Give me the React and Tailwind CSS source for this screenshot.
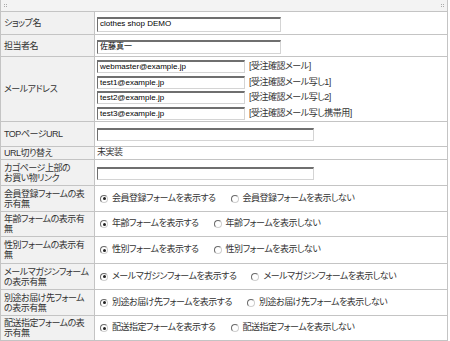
import React from "react";

const FONT = "[font-family:'Liberation_Sans','Noto_Sans_CJK_JP',sans-serif] [font-feature-settings:'palt']";

function Input({ w, h, value }) {
  return (
    <div
      className={`${w} ${h} box-border border-t-2 border-l border-b border-r border-t-[#6f6f6f] border-l-[#6f6f6f] border-b-[#d4d4d4] border-r-[#d4d4d4] bg-white pl-[2px] text-[8px] leading-[10px] tracking-normal text-black overflow-hidden whitespace-nowrap`}
    >
      {value}
    </div>
  );
}

function Radio({ checked, label, className = "" }) {
  return (
    <div className={`flex items-center ${className}`}>
      <span className="w-[8px] h-[8px] rounded-full box-border border border-t-[#6a6a6a] border-l-[#6a6a6a] border-b-[#cfcfcf] border-r-[#cfcfcf] bg-white flex items-center justify-center">
        {checked && <span className="w-[3px] h-[3px] rounded-full bg-[#222]" />}
      </span>
      <span className="ml-[4px] whitespace-nowrap">{label}</span>
    </div>
  );
}

function Row({ h, label, children, valueClass = "" }) {
  return (
    <div className={`flex ${h} box-border border-b border-[#c4c4c4]`}>
      <div className="w-[94px] box-border border-r border-[#c4c4c4] bg-[#f1f1f1] pl-[3px] flex items-center leading-[10px] whitespace-nowrap overflow-hidden">
        <div>{label}</div>
      </div>
      <div className={`flex-1 flex items-center ${valueClass}`}>{children}</div>
    </div>
  );
}

function Dots() {
  return (
    <span className="grid grid-cols-2 gap-[1px]">
      <span className="w-[1px] h-[1px] bg-[#aaa]" />
      <span className="w-[1px] h-[1px] bg-[#aaa]" />
      <span className="w-[1px] h-[1px] bg-[#aaa]" />
      <span className="w-[1px] h-[1px] bg-[#aaa]" />
    </span>
  );
}

export default function App() {
  const radios = [
    ["h-[26px]", <>会員登録フォームの表<br />示有無</>, "会員登録フォームを表示する", "会員登録フォームを表示しない"],
    ["h-[25px]", <>年齢フォームの表示有<br />無</>, "年齢フォームを表示する", "年齢フォームを表示しない"],
    ["h-[27px]", <>性別フォームの表示有<br />無</>, "性別フォームを表示する", "性別フォームを表示しない"],
    ["h-[26px]", <>メールマガジンフォーム<br />の表示有無</>, "メールマガジンフォームを表示する", "メールマガジンフォームを表示しない"],
    ["h-[26px]", <>別途お届け先フォーム<br />の表示有無</>, "別途お届け先フォームを表示する", "別途お届け先フォームを表示しない"],
    ["h-[25px]", <>配送指定フォームの表<br />示有無</>, "配送指定フォームを表示する", "配送指定フォームを表示しない"],
  ];
  return (
    <div className={`w-[450px] h-[341px] bg-white text-[9px] tracking-[-0.5px] text-[#333] ${FONT} overflow-hidden`}>
      <div className="w-[448px] h-[12px] box-border border-b border-l border-r border-[#c4c4c4] bg-[#f3f3f3] bg-[radial-gradient(#dedede_0.6px,transparent_0.7px)] bg-[length:2px_2px] flex items-center justify-between px-[3px]">
        <Dots />
        <Dots />
      </div>
      <div className="w-[448px] box-border border-l border-r border-[#c4c4c4]">
        <Row h="h-[23px]" label="ショップ名" valueClass="pl-[2px] pt-[2px]">
          <Input w="w-[184px]" h="h-[15px]" value="clothes shop DEMO" />
        </Row>
        <Row h="h-[22px]" label="担当者名" valueClass="pl-[2px] pt-[3px]">
          <Input w="w-[184px]" h="h-[14px]" value="佐藤真一" />
        </Row>
        <Row h="h-[65px]" label="メールアドレス" valueClass="pl-[2px] pt-[2px]">
          <div className="flex flex-col gap-[2px]">
            {[
              ["webmaster@example.jp", "[受注確認メール]"],
              ["test1@example.jp", "[受注確認メール写し1]"],
              ["test2@example.jp", "[受注確認メール写し2]"],
              ["test3@example.jp", "[受注確認メール写し携帯用]"],
            ].map(([v, s]) => (
              <div key={v} className="flex items-center">
                <Input w="w-[148px]" h="h-[13px]" value={v} />
                <span className="ml-[4px] whitespace-nowrap">{s}</span>
              </div>
            ))}
          </div>
        </Row>
        <Row h="h-[25px]" label="TOPページURL" valueClass="pl-[2px] pt-[1px]">
          <Input w="w-[217px]" h="h-[13px]" value="" />
        </Row>
        <Row h="h-[13px]" label="URL切り替え" valueClass="pl-[2px]">
          <span>未実装</span>
        </Row>
        <Row h="h-[26px]" label={<>カゴページ上部の<br />お買い物リンク</>} valueClass="pl-[2px] pt-[2px]">
          <Input w="w-[217px]" h="h-[13px]" value="" />
        </Row>
        {radios.map(([h, label, a, b], i) => (
          <Row key={i} h={h} label={label} valueClass="pl-[5px]">
            <Radio checked label={a} />
            <Radio label={b} className="ml-[15px]" />
          </Row>
        ))}
      </div>
    </div>
  );
}
